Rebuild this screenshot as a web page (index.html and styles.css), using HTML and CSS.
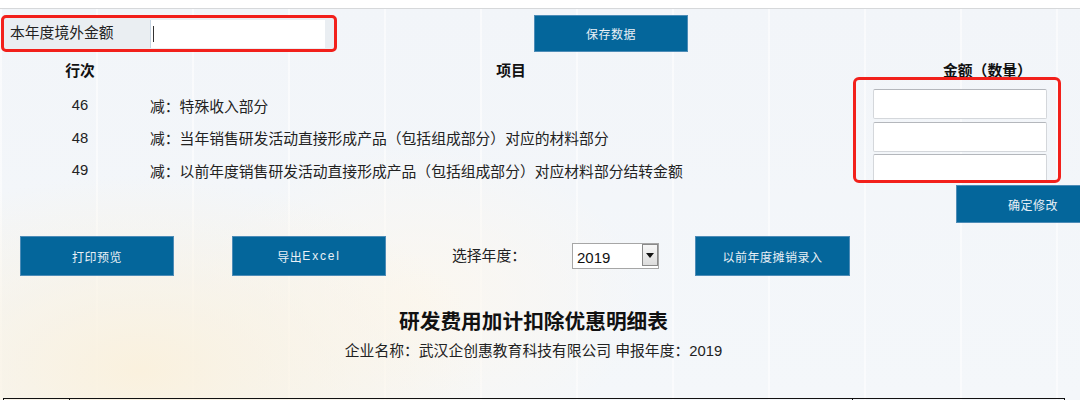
FILE: index.html
```html
<!DOCTYPE html>
<html lang="zh-CN">
<head>
<meta charset="utf-8">
<title>研发费用加计扣除优惠明细表</title>
<link rel="stylesheet" href="styles.css">
</head>
<body>
<div class="page">
  <div class="topbar"></div>

  <div class="row-top">
    <div class="field">
      <div class="field-label">本年度境外金额</div>
      <div class="field-input"><span class="caret"></span></div>
    </div>
    <div class="btn btn-save">保存数据</div>
  </div>

  <div class="grid-head">
    <div class="col-no">行次</div>
    <div class="col-item">项目</div>
    <div class="col-amt">金额（数量）</div>
  </div>

  <div class="grid-body">
    <div class="rows">
      <div class="row"><div class="col-no">46</div><div class="row-text">减：特殊收入部分</div></div>
      <div class="row"><div class="col-no">48</div><div class="row-text">减：当年销售研发活动直接形成产品（包括组成部分）对应的材料部分</div></div>
      <div class="row"><div class="col-no">49</div><div class="row-text">减：以前年度销售研发活动直接形成产品（包括组成部分）对应材料部分结转金额</div></div>
    </div>
    <div class="amounts">
      <div class="amt-input"></div>
      <div class="amt-input"></div>
      <div class="amt-input"></div>
    </div>
  </div>

  <div class="confirm-row"><div class="btn btn-confirm">确定修改</div></div>

  <div class="actions">
    <div class="btn btn-print">打印预览</div>
    <div class="btn btn-export">导出<span class="latin">Excel</span></div>
    <div class="year-label">选择年度：</div>
    <div class="select">
      <span class="select-value">2019</span>
      <span class="select-arrow"><svg width="8" height="5" viewBox="0 0 8 5"><polygon points="0,0 8,0 4,5" fill="#111"/></svg></span>
    </div>
    <div class="btn btn-prior">以前年度摊销录入</div>
  </div>

  <div class="report-head">
    <h1 class="report-title">研发费用加计扣除优惠明细表</h1>
    <p class="report-sub">企业名称：武汉企创惠教育科技有限公司 申报年度：2019</p>
  </div>

  <table class="report-table">
    <colgroup><col class="c1"><col class="c2"><col class="c3"></colgroup>
    <tr><td></td><td></td><td></td></tr>
  </table>
</div>
</body>
</html>
```

FILE: styles.css
```css
html, body {
  margin: 0;
  padding: 0;
  overflow: hidden;
}

body {
  width: 1080px;
  height: 400px;
  font-family: "Liberation Sans", "Noto Sans CJK SC", sans-serif;
  color: #222;
  background: #f3f6f9;
}

.page {
  width: 1080px;
  height: 400px;
  overflow: hidden;
  background:
    radial-gradient(ellipse 460px 260px at 140px 370px, rgba(250, 241, 222, 1), rgba(250, 241, 222, 0) 75%),
    radial-gradient(ellipse 320px 220px at 420px 300px, rgba(252, 247, 238, 0.9), rgba(252, 247, 238, 0) 70%),
    repeating-linear-gradient(90deg, rgba(255, 255, 255, 0.55) 0 2px, rgba(255, 255, 255, 0) 2px 96px),
    linear-gradient(180deg, #f2f5f9 0%, #f4f7fa 100%);
}

.topbar {
  height: 8px;
  background: #fff;
  border-bottom: 1px solid #d6d8da;
}

/* top row */
.row-top {
  display: flex;
  align-items: flex-start;
  margin-top: 6px;
  height: 37px;
}

.field {
  margin-left: 1px;
  width: 336px;
  height: 37px;
  box-sizing: border-box;
  border: 3px solid #f2201b;
  border-radius: 5px;
  background: #eaeef2;
  display: flex;
  align-items: center;
}

.field-label {
  width: 146px;
  padding-left: 6px;
  box-sizing: border-box;
  font-size: 14.8px;
  line-height: 31px;
  color: #222;
}

.field-input {
  width: 175px;
  height: 28px;
  box-sizing: border-box;
  background: #fff;
  border-left: 1px solid #c6d4e2;
  display: flex;
  align-items: center;
  padding-left: 2px;
}

.caret {
  width: 1px;
  height: 16px;
  background: #333;
}

.btn {
  box-sizing: border-box;
  width: 154px;
  flex: none;
  background: #04669b;
  border: 1px solid #4d8cb7;
  color: #e9f0f6;
  font-size: 12px;
  letter-spacing: 0.5px;
  display: flex;
  align-items: center;
  justify-content: center;
}

.btn .latin {
  letter-spacing: 1.8px;
}

.btn-save {
  margin-left: 197px;
  height: 37px;
}

/* grid header */
.grid-head {
  display: flex;
  height: 25px;
  box-sizing: border-box;
  padding-top: 9px;
  font-weight: bold;
  font-size: 14.8px;
  line-height: 20px;
  color: #111;
}

.col-no {
  width: 150px;
  flex: none;
  padding-left: 10px;
  box-sizing: border-box;
  text-align: center;
}

.col-item {
  width: 722px;
  text-align: center;
}

.col-amt {
  padding-left: 71px;
  white-space: nowrap;
}

/* grid body */
.grid-body {
  display: flex;
  height: 106px;
}

.rows {
  width: 853px;
  flex: none;
  padding-top: 12px;
  box-sizing: border-box;
}

.row {
  display: flex;
  align-items: center;
  height: 32.5px;
  font-size: 14.8px;
  color: #222;
}

.row-text {
  white-space: nowrap;
}

.amounts {
  width: 208px;
  height: 106px;
  flex: none;
  box-sizing: border-box;
  border: 3px solid #f2201b;
  border-radius: 6px;
  padding: 9px 11px 0 17px;
  overflow: hidden;
}

.amt-input {
  height: 30px;
  margin-bottom: 2.5px;
  box-sizing: border-box;
  background: #fff;
  border: 1px solid #d4d7db;
  border-top-color: #b4b7bc;
  border-radius: 2px;
}

.confirm-row {
  margin-top: 2px;
  padding-left: 956px;
  height: 38px;
}

.btn-confirm {
  height: 38px;
}

/* action row */
.actions {
  display: flex;
  align-items: center;
  margin-top: 13px;
  height: 40px;
}

.actions .btn {
  height: 40px;
}

.btn-print {
  margin-left: 20px;
}

.btn-export {
  margin-left: 58px;
}

.year-label {
  margin-left: 66px;
  width: 120px;
  flex: none;
  font-size: 14.8px;
  line-height: 20px;
  color: #222;
}

.select {
  width: 87px;
  height: 26px;
  flex: none;
  box-sizing: border-box;
  border: 1px solid #a6a6a6;
  background: #fff;
  display: flex;
  align-items: flex-start;
}

.select-value {
  align-self: flex-end;
  padding-left: 4px;
  font-size: 15px;
  line-height: 20px;
  color: #111;
}

.select-arrow {
  margin-left: auto;
  width: 16px;
  height: 22px;
  box-sizing: border-box;
  border: 1px solid #8a8a8a;
  background: linear-gradient(180deg, #f7f7f7, #dcdcdc);
  display: flex;
  align-items: center;
  justify-content: center;
}

.btn-prior {
  margin-left: 36px;
  width: 155px;
}

/* report heading */
.report-head {
  margin: 32px 0 0 3px;
  width: 1061px;
  text-align: center;
}

.report-title {
  margin: 0;
  font-size: 20.7px;
  line-height: 28px;
  font-weight: bold;
  color: #111;
}

.report-sub {
  margin: 5px 0 0;
  font-size: 14.8px;
  line-height: 20px;
  color: #222;
}

.report-table {
  margin: 37px 0 0 3px;
  width: 1061px;
  table-layout: fixed;
  border-collapse: collapse;
}

.report-table .c1 { width: 66px; }
.report-table .c2 { width: 783px; }
.report-table .c3 { width: 212px; }

.report-table td {
  height: 30px;
  border: 1px solid #111;
  padding: 0;
}
```
